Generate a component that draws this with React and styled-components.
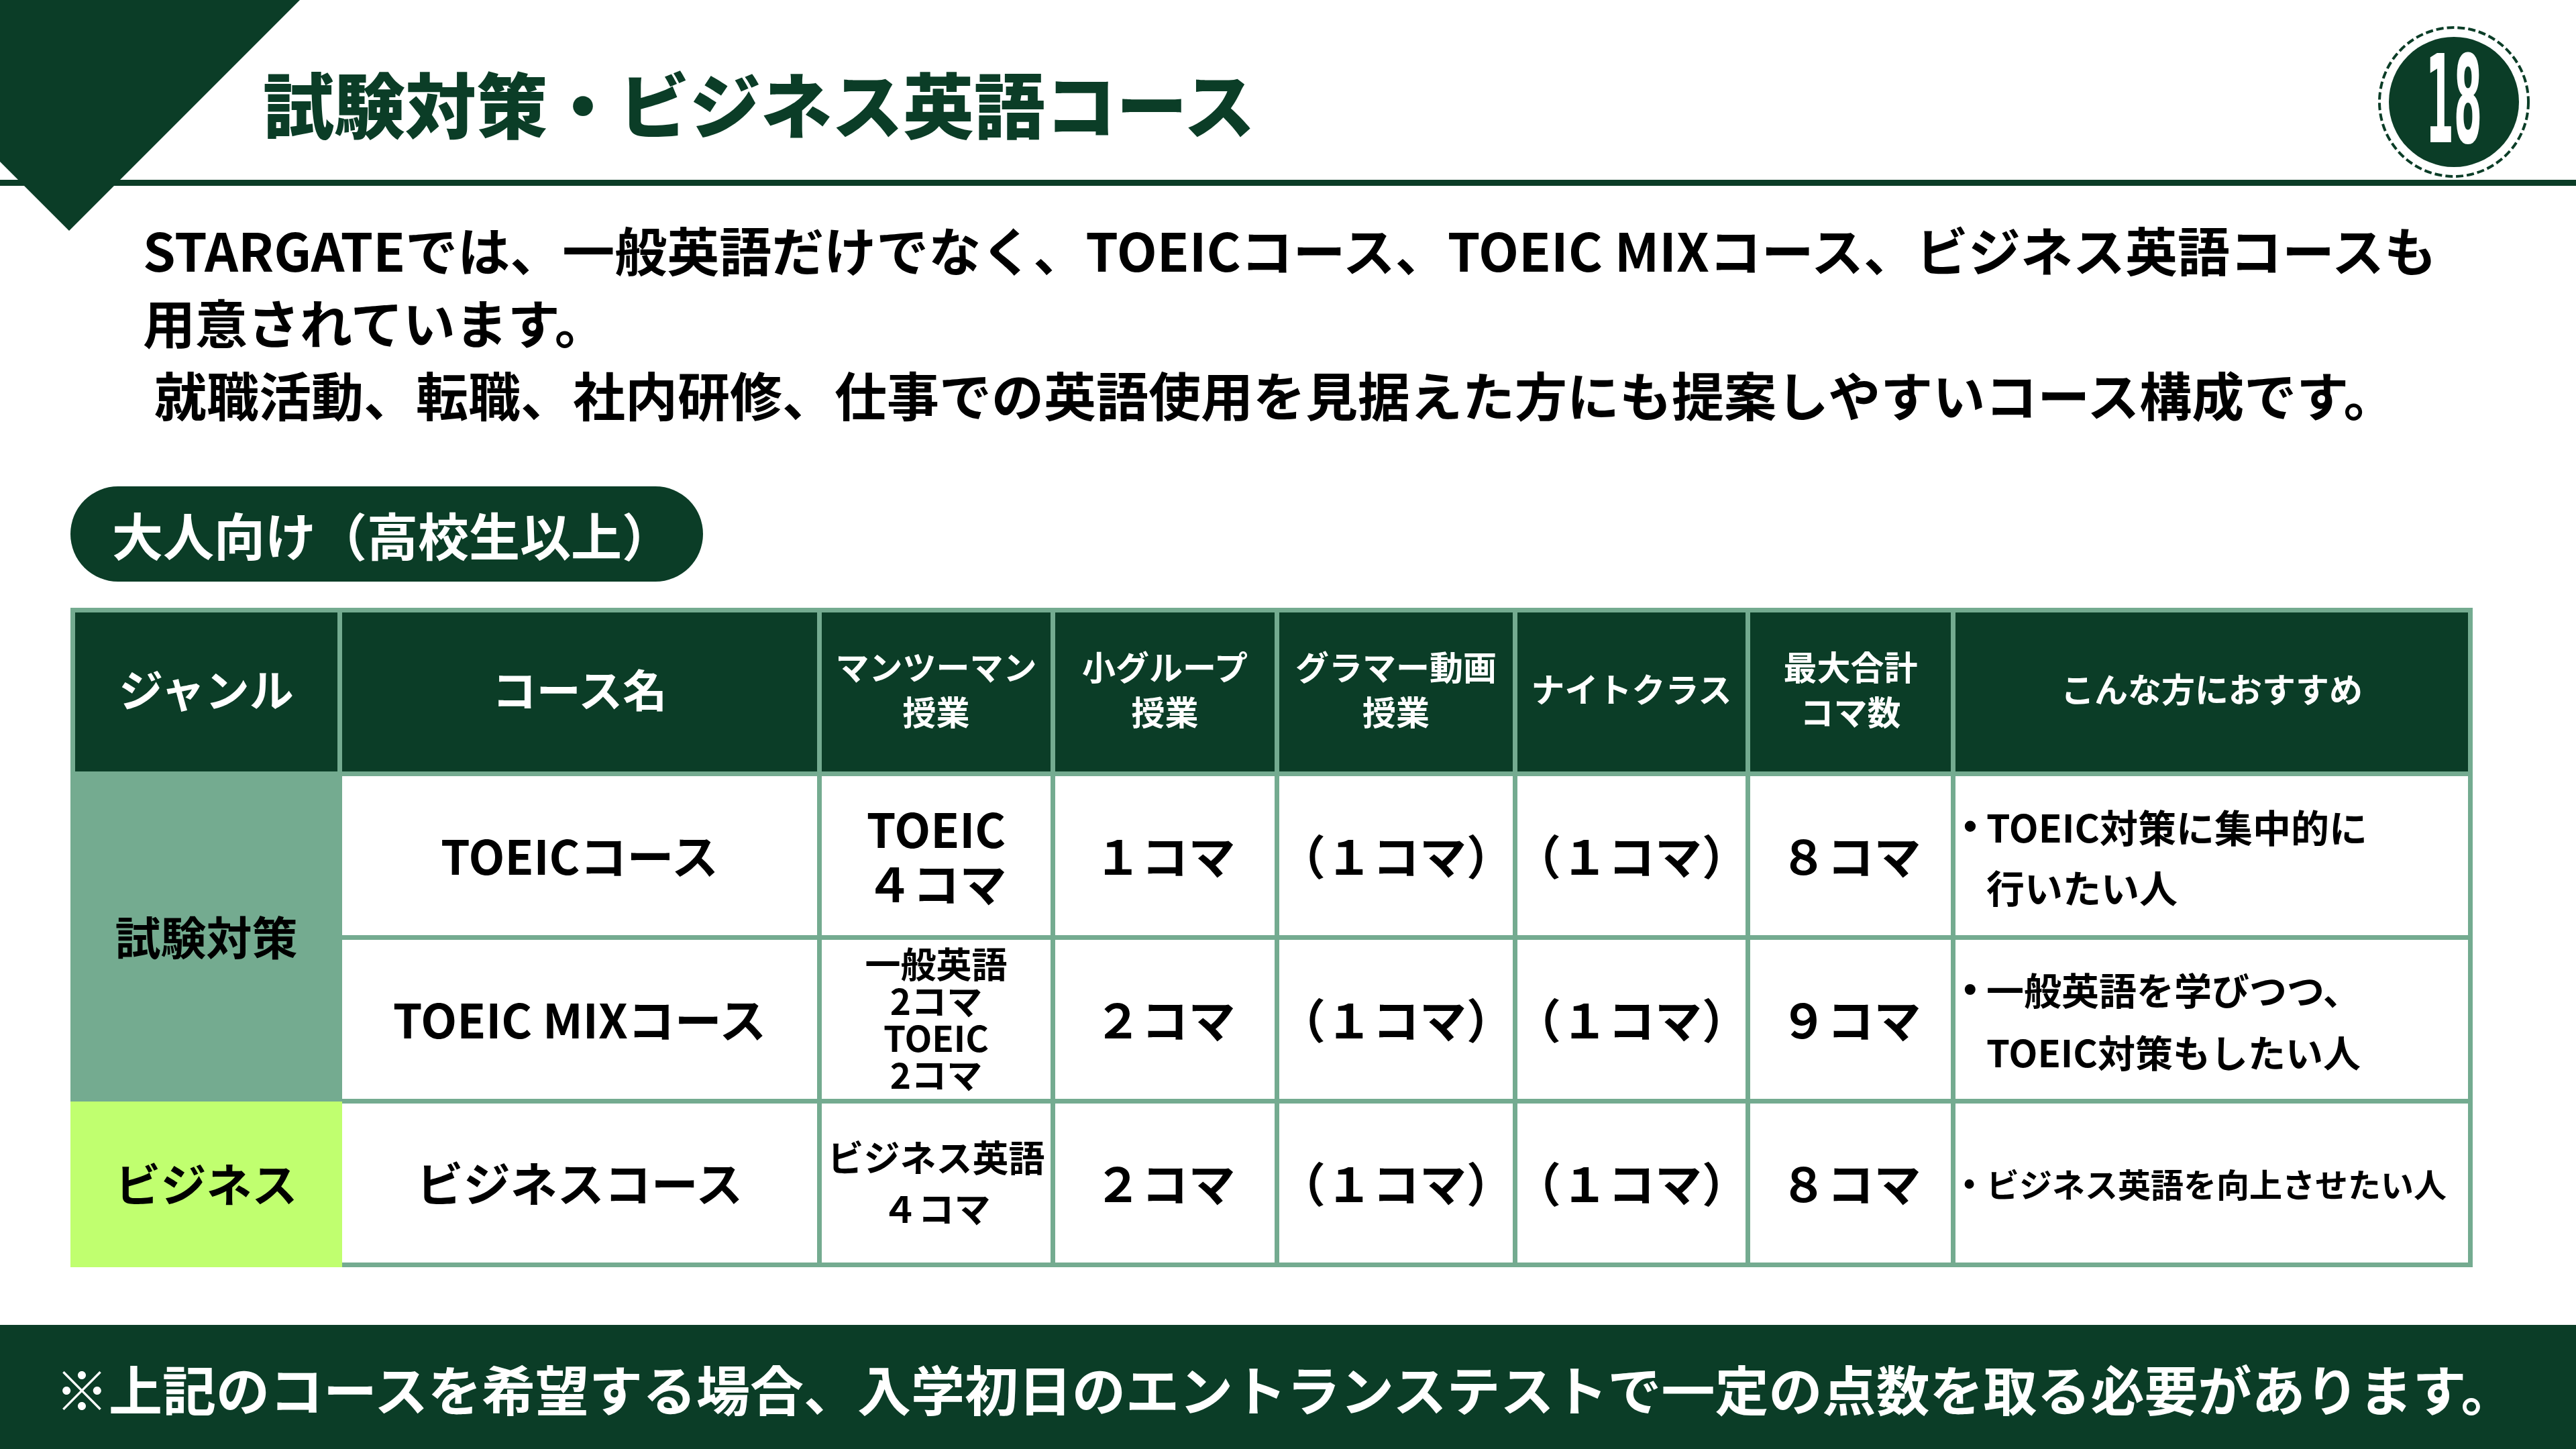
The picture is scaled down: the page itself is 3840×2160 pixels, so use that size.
import React from 'react';
import styled, { createGlobalStyle } from 'styled-components';

const GREEN = '#0b3d27';
const MINT = '#74ab90';
const LIME = '#c0ff6f';
const FONT = '"Noto Sans CJK JP", "Noto Sans", sans-serif';

const Global = createGlobalStyle`
  html, body { margin: 0; padding: 0; background: #fff; }
  body { font-family: ${FONT}; }
`;

const Page = styled.div`
  position: relative;
  width: 3840px;
  height: 2160px;
  overflow: hidden;
  background: #fff;
  display: flex;
  flex-direction: column;
  font-family: ${FONT};
  color: #000;
`;

const Corner = styled.svg`
  position: absolute;
  left: 0;
  top: 0;
`;

const Header = styled.header`
  height: 268px;
  box-sizing: border-box;
  padding: 36px 67px 0 392px;
  display: flex;
  align-items: center;
  justify-content: space-between;
`;

const Title = styled.h1`
  margin: 0;
  font-size: 106px;
  font-weight: 900;
  line-height: 1;
  color: ${GREEN};
  white-space: nowrap;
`;

const Rule = styled.div`
  height: 9px;
  background: ${GREEN};
`;

const Intro = styled.div`
  margin: 40px 0 0 213px;
  font-size: 78px;
  font-weight: 700;
  line-height: 108px;
`;

const IntroLine = styled.div`
  white-space: nowrap;
  padding-left: ${(p) => (p.$indent ? '17px' : '0')};
`;

const Pill = styled.div`
  margin: 84px 0 0 105px;
  align-self: flex-start;
  height: 142px;
  width: 943px;
  box-sizing: border-box;
  border-radius: 71px;
  background: ${GREEN};
  color: #fff;
  font-size: 76px;
  font-weight: 700;
  display: flex;
  align-items: center;
  padding-left: 62px;
  white-space: nowrap;
`;

const Table = styled.div`
  margin: 39px 0 0 105px;
  align-self: flex-start;
  display: grid;
  grid-template-columns: 391px 708px 341px 327px 348px 340px 299px 764px;
  grid-template-rows: repeat(4, 237px);
  gap: 7px;
  padding: 7px;
  background: ${MINT};
`;

const HeadCell = styled.div`
  background: ${GREEN};
  color: #fff;
  font-weight: 700;
  font-size: ${(p) => p.$size}px;
  line-height: 67px;
  display: flex;
  align-items: center;
  justify-content: center;
  text-align: center;
  white-space: nowrap;
  padding-bottom: 12px;
`;

const GenreCell = styled.div`
  background: ${(p) => p.$bg};
  grid-column: 1;
  grid-row: ${(p) => p.$rows};
  margin: ${(p) => p.$margin || '0'};
  font-size: 68px;
  font-weight: 700;
  display: flex;
  align-items: center;
  justify-content: center;
  white-space: nowrap;
  padding-bottom: 6px;
`;

const Cell = styled.div`
  background: #fff;
  font-weight: 700;
  font-size: ${(p) => p.$size || 70}px;
  line-height: ${(p) => p.$lh || 90}px;
  display: flex;
  align-items: center;
  justify-content: center;
  text-align: center;
  white-space: nowrap;
  padding-bottom: 3px;
`;

const RecCell = styled.div`
  background: #fff;
  font-weight: 700;
  font-size: ${(p) => p.$size}px;
  line-height: ${(p) => p.$lh}px;
  display: flex;
  align-items: center;
  padding-left: 12px;
  white-space: nowrap;
`;

const Bullet = styled.span`
  flex: none;
  width: 34px;
  font-family: "Liberation Sans", sans-serif;
`;

const RecItem = styled.div`
  display: flex;
  align-items: flex-start;
`;

const Footer = styled.footer`
  margin-top: auto;
  height: 185px;
  background: ${GREEN};
  color: #fff;
  font-size: 80px;
  font-weight: 700;
  display: flex;
  align-items: center;
  padding-left: 82px;
  white-space: nowrap;
`;

const Lines = ({ lines }) =>
  lines.map((l, i) => (
    <React.Fragment key={i}>
      {i > 0 && <br />}
      {l}
    </React.Fragment>
  ));

const Badge = () => (
  <svg width="230" height="230" viewBox="0 0 230 230">
    <circle cx="115" cy="115" r="111" fill="none" stroke={GREEN} strokeWidth="4" strokeDasharray="11 5" />
    <circle cx="115" cy="115" r="97" fill={GREEN} />
    <text
      x="115"
      y="175"
      textAnchor="middle"
      fill="#fff"
      fontFamily='"DejaVu Sans", sans-serif'
      fontWeight="700"
      fontSize="181"
      textLength="84"
      lengthAdjust="spacingAndGlyphs"
    >
      18
    </text>
  </svg>
);

const headers = [
  { t: ['ジャンル'], s: 66 },
  { t: ['コース名'], s: 66 },
  { t: ['マンツーマン', '授業'], s: 50 },
  { t: ['小グループ', '授業'], s: 50 },
  { t: ['グラマー動画', '授業'], s: 50 },
  { t: ['ナイトクラス'], s: 50 },
  { t: ['最大合計', 'コマ数'], s: 50 },
  { t: ['こんな方におすすめ'], s: 50 },
];

const rows = [
  {
    course: 'TOEICコース',
    man: { t: ['TOEIC', '４コマ'], s: 70, lh: 81 },
    cells: ['１コマ', '（１コマ）', '（１コマ）', '８コマ'],
    rec: { t: ['TOEIC対策に集中的に', '行いたい人'], s: 57, lh: 90 },
  },
  {
    course: 'TOEIC MIXコース',
    man: { t: ['一般英語', '2コマ', 'TOEIC', '2コマ'], s: 53, lh: 55 },
    cells: ['２コマ', '（１コマ）', '（１コマ）', '９コマ'],
    rec: { t: ['一般英語を学びつつ、', 'TOEIC対策もしたい人'], s: 56, lh: 93 },
  },
  {
    course: 'ビジネスコース',
    man: { t: ['ビジネス英語', '４コマ'], s: 54, lh: 76 },
    cells: ['２コマ', '（１コマ）', '（１コマ）', '８コマ'],
    rec: { t: ['ビジネス英語を向上させたい人'], s: 49, lh: 90 },
  },
];

export default function App() {
  return (
    <>
      <Global />
      <Page>
        <Header>
          <Title>試験対策・ビジネス英語コース</Title>
          <Badge />
        </Header>
        <Rule />
        <Corner width="460" height="360" viewBox="0 0 460 360">
          <polygon points="0,0 447,0 103,344 0,241" fill={GREEN} />
        </Corner>
        <Intro>
          <IntroLine>STARGATEでは、一般英語だけでなく、TOEICコース、TOEIC MIXコース、ビジネス英語コースも</IntroLine>
          <IntroLine>用意されています。</IntroLine>
          <IntroLine $indent>就職活動、転職、社内研修、仕事での英語使用を見据えた方にも提案しやすいコース構成です。</IntroLine>
        </Intro>
        <Pill>大人向け（高校生以上）</Pill>
        <Table>
          {headers.map((h, i) => (
            <HeadCell key={i} $size={h.s}>
              <div>
                <Lines lines={h.t} />
              </div>
            </HeadCell>
          ))}
          <GenreCell $bg={MINT} $rows="2 / 4">試験対策</GenreCell>
          <GenreCell $bg={LIME} $rows="4" $margin="-3px -7px -7px -7px">ビジネス</GenreCell>
          {rows.map((r, ri) => (
            <React.Fragment key={ri}>
              <Cell style={{ gridColumn: 2 }}>{r.course}</Cell>
              <Cell $size={r.man.s} $lh={r.man.lh}>
                <div>
                  <Lines lines={r.man.t} />
                </div>
              </Cell>
              {r.cells.map((c, ci) => (
                <Cell key={ci}>{c}</Cell>
              ))}
              <RecCell $size={r.rec.s} $lh={r.rec.lh}>
                <RecItem>
                  <Bullet>•</Bullet>
                  <div>
                    <Lines lines={r.rec.t} />
                  </div>
                </RecItem>
              </RecCell>
            </React.Fragment>
          ))}
        </Table>
        <Footer>※上記のコースを希望する場合、入学初日のエントランステストで一定の点数を取る必要があります。</Footer>
      </Page>
    </>
  );
}
